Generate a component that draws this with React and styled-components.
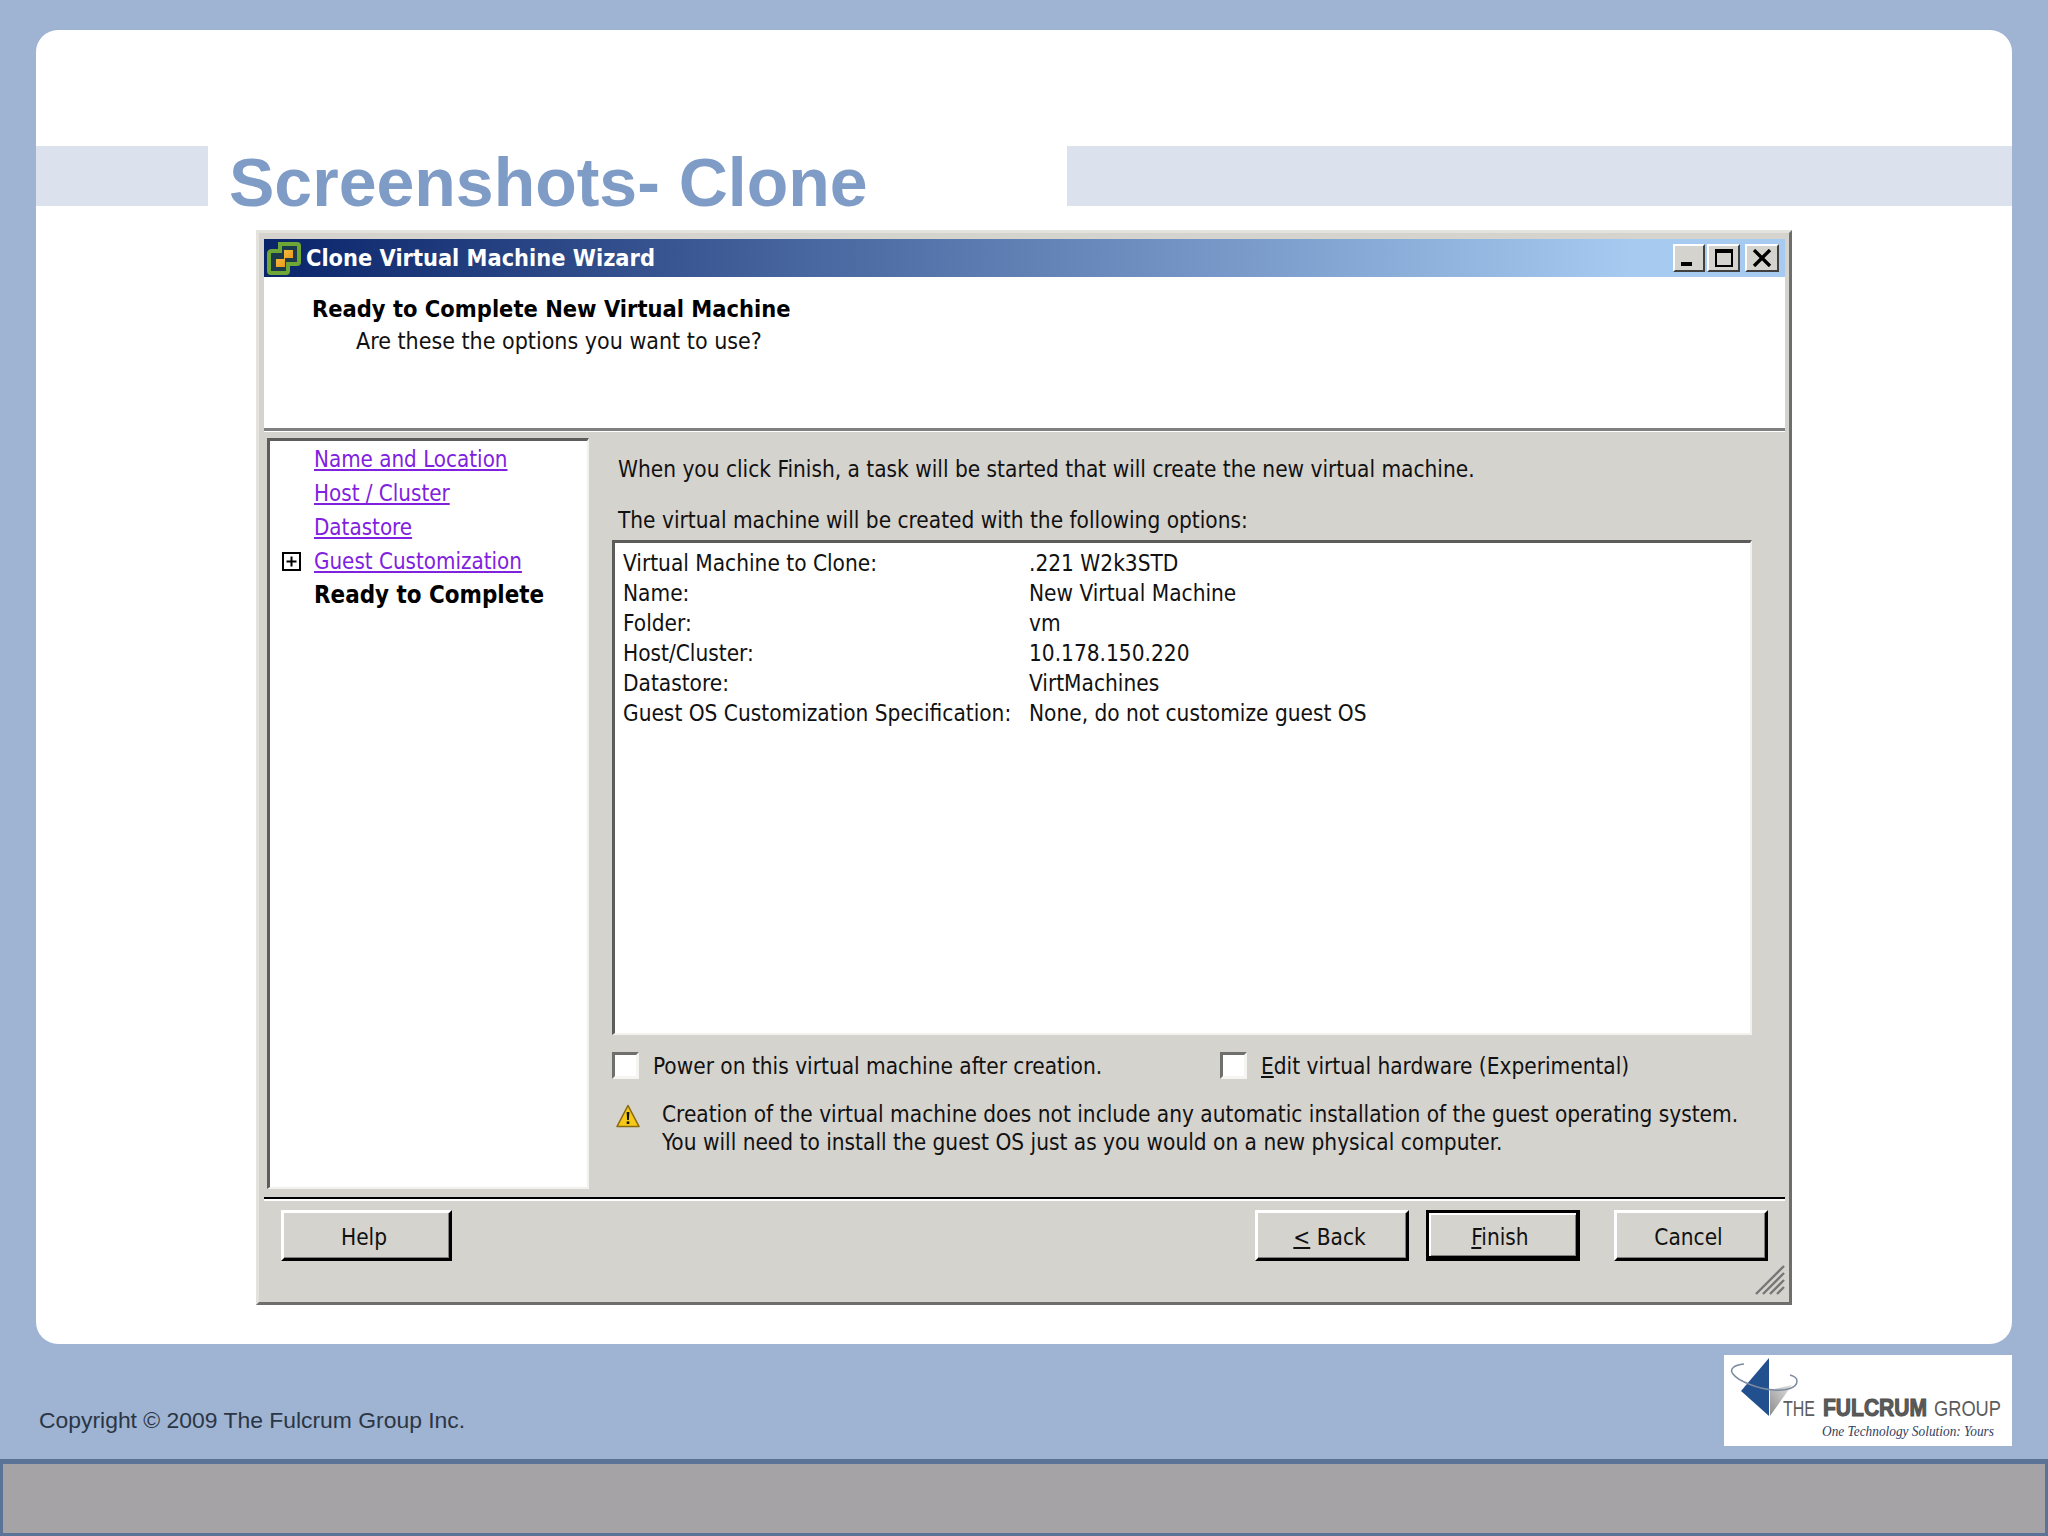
import React from "react";
import styled, { createGlobalStyle } from "styled-components";

const GlobalStyle = createGlobalStyle`
  html, body {
    margin: 0;
    padding: 0;
    background: #9fb3d3;
  }
  * {
    box-sizing: border-box;
  }
`;

const winFont = `"DejaVu Sans", "Liberation Sans", sans-serif`;
const winGray = "#d5d3ce";

const Page = styled.div`
  width: 2048px;
  height: 1536px;
  display: flex;
  flex-direction: column;
  overflow: hidden;
  background: #9fb3d3;
`;

const Card = styled.div`
  margin: 30px 36px 0;
  height: 1314px;
  padding-top: 116px;
  background: #ffffff;
  border-radius: 22px;
`;

const TitleRow = styled.div`
  display: flex;
  height: 60px;
`;

const Band = styled.div`
  width: ${(p) => p.$width}px;
  background: #dbe2ed;
`;

const Title = styled.h1`
  flex: 1;
  margin: 0 0 0 21px;
  font: bold 68px/72px "Liberation Sans", Arial, sans-serif;
  height: 60px;
  color: #7f9cc7;
`;

const Dialog = styled.div`
  width: 1536px;
  height: 1075px;
  margin: 24px 0 0 220px;
  display: flex;
  flex-direction: column;
  padding: 6px 4px 0 5px;
  background: ${winGray};
  border-style: solid;
  border-width: 3px;
  border-color: #e4e2dd #6e6e6c #6e6e6c #e4e2dd;
  font-family: ${winFont};
  font-stretch: condensed;
  font-size: 22.45px;
  color: #111;
`;

const TitleBar = styled.div`
  height: 38px;
  flex: none;
  display: flex;
  align-items: center;
  padding: 0 6px 0 3px;
  background: linear-gradient(90deg, #0a246a 0%, #a6caf0 90%, #a6caf0 100%);
`;

const TitleText = styled.div`
  flex: 1;
  margin-left: 5px;
  color: #fff;
  font-weight: bold;
  font-size: 23.35px;
`;

const WinButtons = styled.div`
  display: flex;
`;

const WinButton = styled.div`
  width: ${(p) => p.$width}px;
  height: 28px;
  margin-left: ${(p) => p.$gap}px;
  display: flex;
  align-items: center;
  justify-content: center;
  background: ${winGray};
  border-style: solid;
  border-width: 2px;
  border-color: #fff #404040 #404040 #fff;
`;

const Header = styled.div`
  height: 151px;
  flex: none;
  padding: 17px 0 0 48px;
  background: #fff;
`;

const HeaderTitle = styled.div`
  font-weight: bold;
  font-size: 23.45px;
  line-height: 30px;
  color: #000;
`;

const HeaderSub = styled.div`
  padding-left: 44px;
  font-size: 23px;
  line-height: 35px;
  color: #111;
`;

const HeaderRule = styled.div`
  height: 4px;
  flex: none;
  border-top: 3px solid #808080;
  border-bottom: 1px solid #fff;
`;

const Main = styled.div`
  flex: none;
  height: 765px;
  display: flex;
`;

const Nav = styled.div`
  width: 322px;
  height: 751px;
  margin: 6px 0 0 3px;
  padding-top: 1px;
  flex: none;
  background: #fff;
  border-style: solid;
  border-width: 3px 2px 2px 3px;
  border-color: #5c5c5a #f2f1ee #f2f1ee #5c5c5a;
`;

const NavRow = styled.div`
  height: 34px;
  display: grid;
  grid-template-columns: 32px auto;
  padding-left: 12px;
  align-items: center;
  justify-content: start;
`;

const NavLink = styled.a`
  color: #8021e0;
  font-size: 22.2px;
  text-decoration: underline;
`;

const NavCurrent = styled.span`
  color: #000;
  font-weight: bold;
  font-size: 23.9px;
`;

const Content = styled.div`
  flex: 1;
  padding: 22px 0 0 23px;
`;

const Line = styled.div`
  line-height: 31px;
  padding-left: 6px;
  margin-bottom: ${(p) => p.$after}px;
`;

const OptionsBox = styled.div`
  width: 1140px;
  height: 495px;
  padding: 5px 0 0 8px;
  background: #fff;
  border-style: solid;
  border-width: 3px 2px 2px 3px;
  border-color: #5c5c5a #f2f1ee #f2f1ee #5c5c5a;
  display: grid;
  grid-template-columns: 406px auto;
  grid-auto-rows: 30px;
  align-items: center;
  justify-content: start;
  align-content: start;
`;

const CheckRow = styled.div`
  display: flex;
  margin-top: 17px;
  height: 27px;
`;

const CheckItem = styled.div`
  width: ${(p) => p.$width}px;
  display: flex;
  align-items: center;
  gap: 14px;
`;

const Box = styled.div`
  width: 27px;
  height: 27px;
  flex: none;
  background: #fff;
  border-style: solid;
  border-width: 3px;
  border-color: #6f6f6d #f6f5f2 #f6f5f2 #6f6f6d;
`;

const WarningRow = styled.div`
  display: flex;
  margin-top: 21px;
  padding-left: 4px;
  gap: 22px;
`;

const WarningIcon = styled.svg`
  width: 24px;
  height: 24px;
  flex: none;
  margin-top: 4px;
`;

const WarningLine = styled.div`
  line-height: 28px;
  white-space: nowrap;
`;

const ButtonBar = styled.div`
  position: relative;
  flex: 1;
  display: flex;
  gap: 17px;
  padding: 11px 17px 0 17px;
  border-top: 2px solid #000;
  box-shadow: inset 0 2px 0 #fff;
`;

const Button = styled.div`
  width: ${(p) => p.$width}px;
  height: 51px;
  margin-left: ${(p) => p.$gap || 0}px;
  margin-right: ${(p) => (p.$push ? "auto" : 0)};
  padding: ${(p) => (p.$primary ? "4px" : "2px")} 5px 0 0;
  display: flex;
  align-items: center;
  justify-content: center;
  background: ${winGray};
  border-style: solid;
  border-width: ${(p) => (p.$primary ? "3px 4px 5px 3px" : "3px")};
  border-color: ${(p) => (p.$primary ? "#000" : "#fff #000 #000 #fff")};
  box-shadow: ${(p) =>
    p.$primary ? "inset 2px 2px 0 #fff, inset -1px -1px 0 #808080" : "inset -1px -1px 0 #808080"};
  color: #111;
`;

const Grip = styled.svg`
  position: absolute;
  right: 0;
  bottom: 7px;
  width: 30px;
  height: 30px;
`;

const Footer = styled.div`
  height: 115px;
  flex: none;
  display: flex;
  justify-content: space-between;
  padding: 11px 36px 0 39px;
`;

const Copyright = styled.div`
  margin-top: 50px;
  font: 22.9px/30px "Liberation Sans", Arial, sans-serif;
  color: #2b3644;
`;

const BottomBar = styled.div`
  flex: 1;
  background: #a5a3a5;
  border-style: solid;
  border-color: #5b7396;
  border-width: 5px 3px 3px;
`;

function VmIcon() {
  return (
    <svg width="34" height="33" viewBox="0 0 34 33">
      <defs>
        <linearGradient id="vmOrange" x1="0" y1="0" x2="1" y2="1">
          <stop offset="0" stopColor="#f7c948" />
          <stop offset="1" stopColor="#e88a10" />
        </linearGradient>
      </defs>
      <path d="M13 2 H30 Q32 2 32 4 V20 Q32 22 30 22 H21 V29 Q21 31 19 31 H4 Q2 31 2 29 V12 Q2 9 5 9 H13 Z" fill="#1c3a4a" stroke="#6fa736" strokeWidth="4" />
      <path d="M17 8 H26 V16 H18 V25 H9 V17 H17 Z" fill="url(#vmOrange)" />
    </svg>
  );
}

function Logo() {
  return (
    <svg width="288" height="91" viewBox="0 0 288 91" style={{ display: "block", background: "#fff" }}>
      <defs>
        <linearGradient id="grayFace" x1="0" y1="1" x2="1" y2="0">
          <stop offset="0" stopColor="#8d8d8d" />
          <stop offset="1" stopColor="#e2e2e2" />
        </linearGradient>
      </defs>
      <path d="M45 3 L17 36 L45 61 Z" fill="#22508f" />
      <path d="M46 35 L68 30 L46 61 Z" fill="url(#grayFace)" />
      <path d="M20 9 C10 10 5 14 9 19 C14 26 34 34 50 35 C62 36 73 33 73 26 C73 23 70 21 66 20" fill="none" stroke="#7b8aa0" strokeWidth="1.5" />
      <g fontFamily="'Liberation Sans', Arial, sans-serif" fill="#5c5c5c" fontSize="22">
        <text x="59" y="61" textLength="32" lengthAdjust="spacingAndGlyphs">THE</text>
        <text x="99" y="61" fontWeight="bold" fontSize="23" stroke="#4e4e4e" strokeWidth="1" textLength="104" lengthAdjust="spacingAndGlyphs">FULCRUM</text>
        <text x="210" y="61" textLength="67" lengthAdjust="spacingAndGlyphs">GROUP</text>
      </g>
      <text x="98" y="81" fontFamily="'Liberation Serif', serif" fontStyle="italic" fontSize="14" fill="#2f4060" textLength="172" lengthAdjust="spacingAndGlyphs">One Technology Solution: Yours</text>
    </svg>
  );
}

const options = [
  ["Virtual Machine to Clone:", ".221 W2k3STD"],
  ["Name:", "New Virtual Machine"],
  ["Folder:", "vm"],
  ["Host/Cluster:", "10.178.150.220"],
  ["Datastore:", "VirtMachines"],
  ["Guest OS Customization Specification:", "None, do not customize guest OS"],
];

const steps = ["Name and Location", "Host / Cluster", "Datastore"];

export default function App() {
  return (
    <Page>
      <GlobalStyle />
      <Card>
        <TitleRow>
          <Band $width={172} />
          <Title>Screenshots- Clone</Title>
          <Band $width={945} />
        </TitleRow>
        <Dialog>
          <TitleBar>
            <VmIcon />
            <TitleText>Clone Virtual Machine Wizard</TitleText>
            <WinButtons>
              <WinButton $width={32} $gap={0}>
                <svg width="20" height="20" viewBox="0 0 20 20"><rect x="2" y="14" width="11" height="4" fill="#000" /></svg>
              </WinButton>
              <WinButton $width={33} $gap={2}>
                <svg width="22" height="22" viewBox="0 0 22 22"><path d="M2 2h18v18H2z M4 6v12h14V6z" fill="#000" fillRule="evenodd" /></svg>
              </WinButton>
              <WinButton $width={34} $gap={5}>
                <svg width="20" height="18" viewBox="0 0 20 18"><path d="M2 1 L18 17 M18 1 L2 17" stroke="#000" strokeWidth="3.4" /></svg>
              </WinButton>
            </WinButtons>
          </TitleBar>
          <Header>
            <HeaderTitle>Ready to Complete New Virtual Machine</HeaderTitle>
            <HeaderSub>Are these the options you want to use?</HeaderSub>
          </Header>
          <HeaderRule />
          <Main>
            <Nav>
              {steps.map((s) => (
                <NavRow key={s}>
                  <span />
                  <NavLink>{s}</NavLink>
                </NavRow>
              ))}
              <NavRow>
                <svg width="19" height="19" viewBox="0 0 19 19">
                  <path d="M1 1h17v17H1z" fill="#fff" stroke="#000" strokeWidth="2" />
                  <path d="M9.5 4.5v10M4.5 9.5h10" stroke="#000" strokeWidth="2" />
                </svg>
                <NavLink>Guest Customization</NavLink>
              </NavRow>
              <NavRow>
                <span />
                <NavCurrent>Ready to Complete</NavCurrent>
              </NavRow>
            </Nav>
            <Content>
              <Line $after={20}>When you click Finish, a task will be started that will create the new virtual machine.</Line>
              <Line $after={4}>The virtual machine will be created with the following options:</Line>
              <OptionsBox>
                {options.map(([label, value]) => (
                  <React.Fragment key={label}>
                    <span>{label}</span>
                    <span>{value}</span>
                  </React.Fragment>
                ))}
              </OptionsBox>
              <CheckRow>
                <CheckItem $width={608}>
                  <Box />
                  <span>Power on this virtual machine after creation.</span>
                </CheckItem>
                <CheckItem $width={500}>
                  <Box />
                  <span><u>E</u>dit virtual hardware (Experimental)</span>
                </CheckItem>
              </CheckRow>
              <WarningRow>
                <WarningIcon viewBox="0 0 24 24">
                  <path d="M12 1.5 L23 22.5 H1 Z" fill="#f6c915" stroke="#8a6a10" strokeWidth="1.6" strokeLinejoin="round" />
                  <path d="M10.6 8h2.8l-.5 8h-1.8z" fill="#111" />
                  <rect x="10.7" y="17.4" width="2.6" height="2.6" fill="#111" />
                </WarningIcon>
                <div>
                  <WarningLine>Creation of the virtual machine does not include any automatic installation of the guest operating system.</WarningLine>
                  <WarningLine>You will need to install the guest OS just as you would on a new physical computer.</WarningLine>
                </div>
              </WarningRow>
            </Content>
          </Main>
          <ButtonBar>
            <Button $width={171} $push>Help</Button>
            <Button $width={154}><span><u>&lt;</u> Back</span></Button>
            <Button $width={154} $primary><span><u>F</u>inish</span></Button>
            <Button $width={154} $gap={17}>Cancel</Button>
            <Grip viewBox="0 0 30 30">
              <path d="M1 29 L29 1 M8 29 L29 8 M15 29 L29 15 M22 29 L29 22" stroke="#777" strokeWidth="2.4" />
            </Grip>
          </ButtonBar>
        </Dialog>
      </Card>
      <Footer>
        <Copyright>Copyright © 2009 The Fulcrum Group Inc.</Copyright>
        <Logo />
      </Footer>
      <BottomBar />
    </Page>
  );
}
